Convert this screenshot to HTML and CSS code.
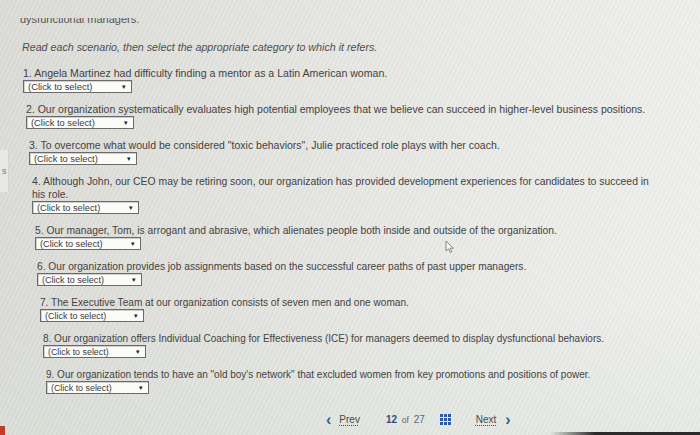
FILE: index.html
```html
<!DOCTYPE html>
<html lang="en">
<head>
<meta charset="utf-8">
<title>Scenarios</title>
<link rel="stylesheet" href="styles.css">
</head>
<body>
<div class="screen">
  <div class="side-tab">s</div>
  <main class="content">
    <p class="cut-title">dysfunctional managers.</p>
    <p class="instructions">Read each scenario, then select the appropriate category to which it refers.</p>
    <ol class="questions">
      <li class="q q1">
        <div class="q-text">1. Angela Martinez had difficulty finding a mentor as a Latin American woman.</div>
        <div class="select"><span>(Click to select)</span><span class="arrow">&#9662;</span></div>
      </li>
      <li class="q q2">
        <div class="q-text">2. Our organization systematically evaluates high potential employees that we believe can succeed in higher-level business positions.</div>
        <div class="select"><span>(Click to select)</span><span class="arrow">&#9662;</span></div>
      </li>
      <li class="q q3">
        <div class="q-text">3. To overcome what would be considered "toxic behaviors", Julie practiced role plays with her coach.</div>
        <div class="select"><span>(Click to select)</span><span class="arrow">&#9662;</span></div>
      </li>
      <li class="q q4">
        <div class="q-text">4. Although John, our CEO may be retiring soon, our organization has provided development experiences for candidates to succeed in his role.</div>
        <div class="select"><span>(Click to select)</span><span class="arrow">&#9662;</span></div>
      </li>
      <li class="q q5">
        <div class="q-text">5. Our manager, Tom, is arrogant and abrasive, which alienates people both inside and outside of the organization.</div>
        <div class="select"><span>(Click to select)</span><span class="arrow">&#9662;</span></div>
      </li>
      <li class="q q6">
        <div class="q-text">6. Our organization provides job assignments based on the successful career paths of past upper managers.</div>
        <div class="select"><span>(Click to select)</span><span class="arrow">&#9662;</span></div>
      </li>
      <li class="q q7">
        <div class="q-text">7. The Executive Team at our organization consists of seven men and one woman.</div>
        <div class="select"><span>(Click to select)</span><span class="arrow">&#9662;</span></div>
      </li>
      <li class="q q8">
        <div class="q-text">8. Our organization offers Individual Coaching for Effectiveness (ICE) for managers deemed to display dysfunctional behaviors.</div>
        <div class="select"><span>(Click to select)</span><span class="arrow">&#9662;</span></div>
      </li>
      <li class="q q9">
        <div class="q-text">9. Our organization tends to have an "old boy's network" that excluded women from key promotions and positions of power.</div>
        <div class="select"><span>(Click to select)</span><span class="arrow">&#9662;</span></div>
      </li>
    </ol>
  </main>
  <nav class="pager">
    <a class="pager-link prev"><span class="chev">&#8249;</span><span class="lbl">Prev</span></a>
    <span class="count"><b>12</b> <span class="of">of</span> 27</span>
    <svg class="grid-icon" width="11" height="11" viewBox="0 0 11 11" aria-hidden="true">
      <rect x="0" y="0" width="3" height="3"/><rect x="4" y="0" width="3" height="3"/><rect x="8" y="0" width="3" height="3"/>
      <rect x="0" y="4" width="3" height="3"/><rect x="4" y="4" width="3" height="3"/><rect x="8" y="4" width="3" height="3"/>
      <rect x="0" y="8" width="3" height="3"/><rect x="4" y="8" width="3" height="3"/><rect x="8" y="8" width="3" height="3"/>
    </svg>
    <a class="pager-link next"><span class="lbl">Next</span><span class="chev">&#8250;</span></a>
  </nav>
  <svg class="cursor" width="10" height="14" viewBox="0 0 10 14" aria-hidden="true">
    <path d="M1 1 L1 11 L3.5 8.8 L5.3 12.6 L6.8 11.9 L5.1 8.2 L8.4 8.2 Z" fill="#f4f4f2" stroke="#7a7a7a" stroke-width="0.9"/>
  </svg>
  <div class="bezel"></div>
  <div class="red-corner"></div>
</div>
</body>
</html>
```
FILE: styles.css
```css
html, body {
  margin: 0;
  padding: 0;
}
body {
  width: 700px;
  height: 435px;
  overflow: hidden;
  font-family: "Liberation Sans", Arial, sans-serif;
  color: #454545;
}
.screen {
  position: relative;
  width: 700px;
  height: 435px;
  overflow: hidden;
  background:
    repeating-linear-gradient(115deg, rgba(255,255,255,0.10) 0 2px, rgba(0,0,0,0.015) 2px 4px),
    linear-gradient(180deg, rgba(0,0,0,0) 70%, rgba(214,226,214,0.35) 100%),
    linear-gradient(90deg, #dadad6 0%, #e1e1dd 30%, #e9e9e6 65%, #eeeeec 100%);
  display: flex;
  flex-direction: column;
}
.content {
  margin-top: 18px;
  overflow: hidden;
  padding-left: 20px;
}
.cut-title {
  margin: -5px 0 0 0;
  font-size: 11px;
  line-height: 13px;
  color: #555;
}
.instructions {
  margin: 15px 0 0 2px;
  font-style: italic;
  font-size: 10.7px;
  line-height: 13px;
  color: #4f4f4f;
}
.questions {
  list-style: none;
  margin: 13px 0 0 0;
  padding: 0;
}
.q {
  margin-bottom: 10px;
  font-size: 10.6px;
}
.q-text {
  font-size: 1em;
  line-height: 13px;
  color: #434343;
  padding-right: 36px;
}
.select {
  display: flex;
  justify-content: space-between;
  align-items: center;
  box-sizing: border-box;
  width: 10.3em;
  height: 13px;
  padding: 0 5px 0 4px;
  background: #fbfbfa;
  border: 1px solid #6a6a6a;
  box-shadow: inset 1px 1px 0 #cfcfcf;
  font-size: 0.89em;
  color: #3c3c3c;
}
.select .arrow {
  font-size: 7px;
  color: #222;
}
.q1 { padding-left: 3px; }
.q2 { padding-left: 6px; font-size: 10.5px; }
.q3 { padding-left: 9px; font-size: 10.5px; }
.q4 { padding-left: 12px; font-size: 10.4px; }
.q5 { padding-left: 15px; font-size: 10.3px; }
.q6 { padding-left: 17px; font-size: 10.2px; }
.q7 { padding-left: 20px; font-size: 10.1px; }
.q8 { padding-left: 23px; font-size: 10px; }
.q9 { padding-left: 26px; font-size: 10px; }
.q .select { width: 11.55em; }

.pager {
  position: relative;
  display: flex;
  align-items: center;
  margin: auto 0 0 0;
  padding: 0 0 10px 326px;
  font-size: 10px;
  color: #555;
}
.pager-link {
  display: flex;
  align-items: center;
  color: #4a4a4a;
}
.pager-link .lbl {
  text-decoration: underline dotted;
  text-underline-offset: 2px;
}
.chev {
  color: #2f5f9e;
  font-size: 16px;
  font-weight: bold;
  line-height: 10px;
}
.prev .chev { margin-right: 8px; }
.next .chev { margin-left: 9px; }
.count {
  margin-left: 26px;
  color: #666;
}
.count b {
  color: #2d4f85;
}
.count .of {
  font-size: 8.5px;
  margin: 0 2px;
}
.grid-icon {
  margin-left: 15px;
  margin-right: 25px;
  fill: #2f5aa3;
}
.cursor {
  position: absolute;
  left: 445px;
  top: 240px;
}
.side-tab {
  position: absolute;
  left: 0;
  top: 150px;
  width: 9px;
  height: 42px;
  border-right: 1px solid #d3d3cf;
  background: #e8e8e5;
  font-size: 9px;
  color: #777;
  line-height: 42px;
  padding-left: 2px;
  box-sizing: border-box;
}
.bezel {
  position: absolute;
  right: 0;
  bottom: 0;
  width: 150px;
  height: 3px;
  background: linear-gradient(90deg, rgba(40,40,40,0), #2a2a2a 30%);
}
.red-corner {
  position: absolute;
  left: 0;
  bottom: 0;
  width: 5px;
  height: 9px;
  background: #c43a2c;
}
```
